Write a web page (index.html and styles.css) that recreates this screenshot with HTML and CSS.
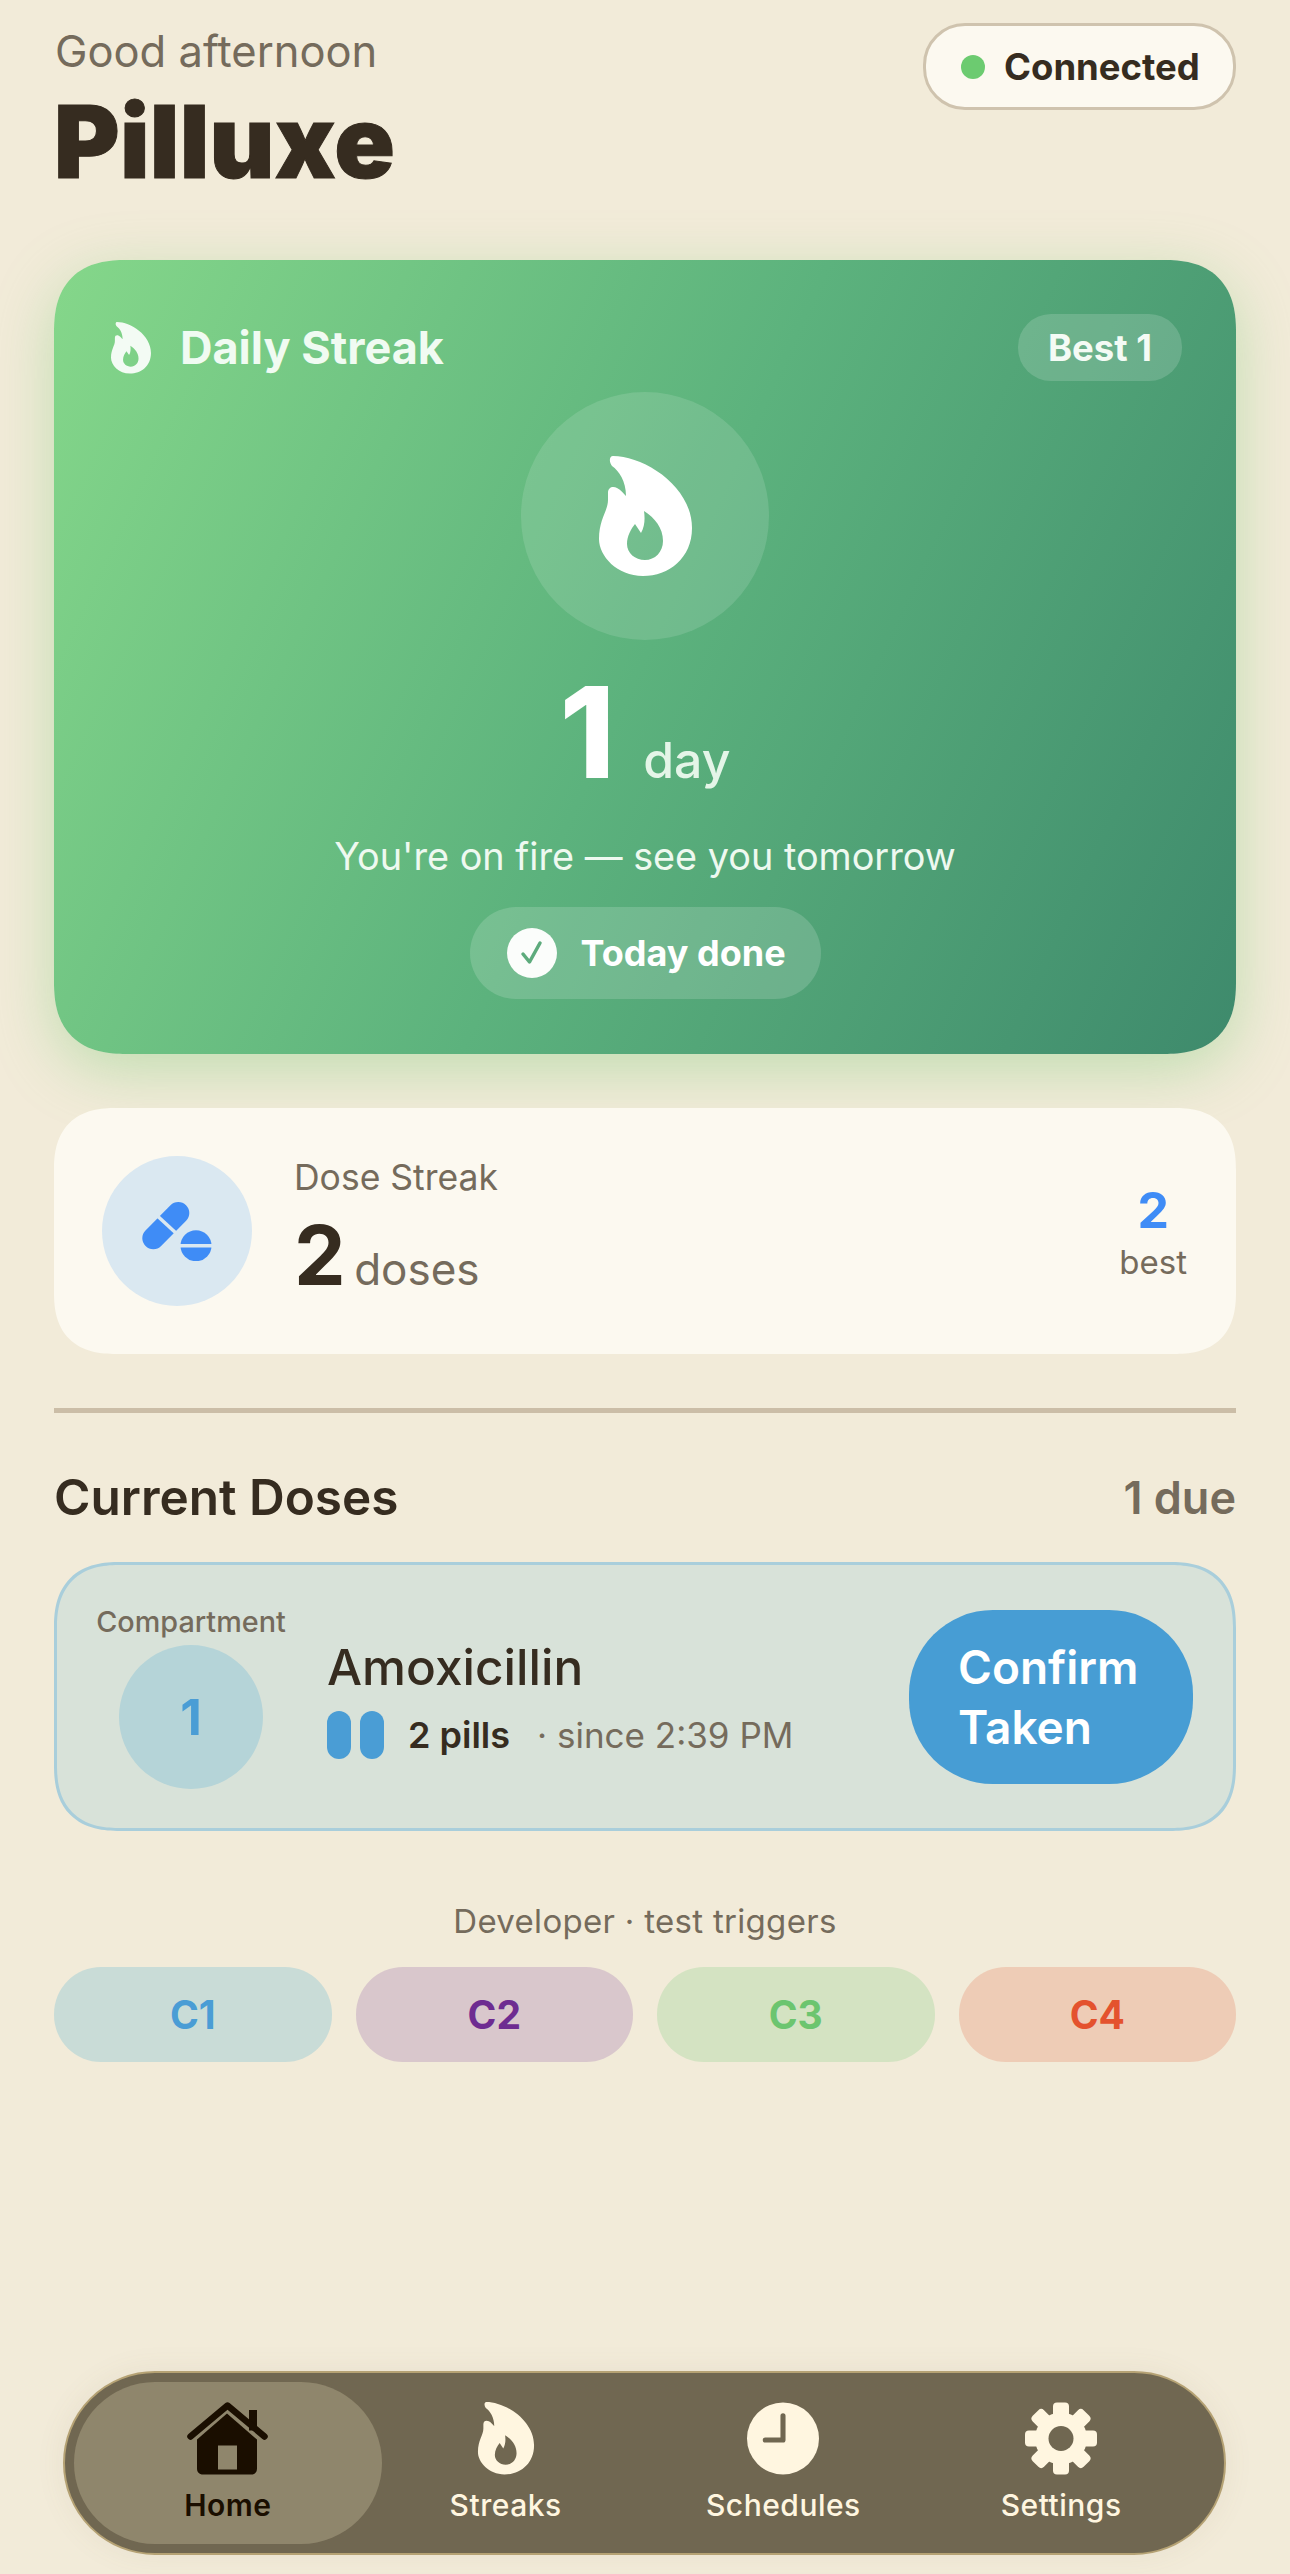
FILE: index.html
```html
<!DOCTYPE html>
<html lang="en">

<head>
    <meta charset="utf-8">
    <title>Pilluxe</title>
    <link rel="stylesheet" href="styles.css">
</head>

<body>
    <svg class="defs" width="0" height="0">
        <symbol id="flame" viewBox="0 0 93 121">
            <path fill-rule="evenodd" d="M14 0C45 0 93 30 93 72C93 102 70 120 44 120C18 120 0 100 0 83C0 63 9 55 9 44L9 37C9 31 14 30 18 32C22 34 25 38 27 40C27 25 20 15 13 10C10 6 10 0 14 0ZM45 55C56 62 64 72 64 85C64 96 56 104 46 104C36 104 28 97 28 88C28 80 32 73 36 68L42 77C46 70 46 62 45 55Z" />
        </symbol>
    </svg>

    <div class="page">
        <header class="top">
            <div>
                <p class="greeting">Good afternoon</p>
                <h1 class="brand">Pilluxe</h1>
            </div>
            <div class="status">
                <span class="status-dot"></span>
                <span>Connected</span>
            </div>
        </header>

        <!-- daily streak -->
        <section class="daily">
            <div class="daily-head">
                <div class="daily-title">
                    <svg class="flame-small"><use href="#flame" /></svg>
                    <span>Daily Streak</span>
                </div>
                <span class="best-pill">Best 1</span>
            </div>

            <div class="flame-circle">
                <svg class="flame-big"><use href="#flame" /></svg>
            </div>

            <div class="daily-count">
                <span class="daily-num">1</span>
                <span class="daily-unit">day</span>
            </div>

            <p class="daily-msg">You're on fire — see you tomorrow</p>

            <div class="done-pill">
                <svg class="done-check" viewBox="0 0 50 50">
                    <circle cx="25" cy="25" r="25" fill="#fbfdfb" />
                    <path d="M16 26L22.500 34L33 15" fill="none" stroke="#5dab7c" stroke-width="3.500" stroke-linecap="round" stroke-linejoin="round" />
                </svg>
                <span>Today done</span>
            </div>
        </section>

        <!-- dose streak -->
        <section class="dose-streak">
            <div class="pill-circle">
                <svg class="pill-icon" viewBox="0 0 70 60">
                    <path d="M11.300 37.300L36.300 12" fill="none" stroke="#3f8cf6" stroke-width="22" stroke-linecap="round" />
                    <path d="M16 15.500L35 33" fill="none" stroke="#dae8f1" stroke-width="3.500" />
                    <circle cx="54" cy="44.700" r="15.500" fill="#3f8cf6" />
                    <path d="M37 44.700H71" fill="none" stroke="#dae8f1" stroke-width="3.500" />
                </svg>
            </div>
            <div class="dose-info">
                <p class="dose-label">Dose Streak</p>
                <p class="dose-value"><span class="dose-num">2</span> <span class="dose-unit">doses</span></p>
            </div>
            <div class="dose-best">
                <span class="dose-best-num">2</span>
                <span class="dose-best-label">best</span>
            </div>
        </section>

        <hr class="divider" />

        <div class="section-head">
            <h2>Current Doses</h2>
            <span>1 due</span>
        </div>

        <!-- current dose -->
        <section class="dose-card">
            <div class="compartment">
                <span class="compartment-label">Compartment</span>
                <span class="compartment-num">1</span>
            </div>
            <div class="dose-main">
                <h3>Amoxicillin</h3>
                <div class="dose-meta">
                    <span class="pill-marks"><i></i><i></i></span>
                    <strong>2 pills</strong>
                    <span class="dose-since">· since 2:39 PM</span>
                </div>
            </div>
            <button class="confirm">Confirm<br>Taken</button>
        </section>

        <p class="dev-label">Developer · test triggers</p>
        <div class="triggers">
            <button class="trigger c1">C1</button>
            <button class="trigger c2">C2</button>
            <button class="trigger c3">C3</button>
            <button class="trigger c4">C4</button>
        </div>

        <nav class="tabbar">
            <a class="tab active">
                <svg class="tab-icon home-icon" viewBox="0 0 81 72">
                    <path d="M62 7.500H70V28H62Z" fill="#1a0e00" />
                    <path d="M10 37L40 11L70 37V66C70 69.500 68 72 64 72H16C12 72 10 69.500 10 66Z" fill="#1a0e00" />
                    <path d="M31 43H50V67H31Z" fill="#8f866c" />
                    <path d="M3.500 34L40.500 3L77.500 34" fill="none" stroke="#1a0e00" stroke-width="6.500" stroke-linecap="round" stroke-linejoin="round" />
                </svg>
                <span>Home</span>
            </a>
            <a class="tab">
                <svg class="tab-icon"><use href="#flame" /></svg>
                <span>Streaks</span>
            </a>
            <a class="tab">
                <svg class="tab-icon" viewBox="0 0 71 71">
                    <circle cx="35.500" cy="35.500" r="35.500" fill="#fff6e0" />
                    <path d="M35.500 13V37H18" fill="none" stroke="#706751" stroke-width="5" stroke-linecap="round" stroke-linejoin="round" />
                </svg>
                <span>Schedules</span>
            </a>
            <a class="tab">
                <svg class="tab-icon" viewBox="0 0 72 72">
                    <g fill="#fff6e0">
                        <rect x="28" width="16" height="72" rx="4" />
                        <rect x="28" width="16" height="72" rx="4" transform="rotate(45 36 36)" />
                        <rect x="28" width="16" height="72" rx="4" transform="rotate(90 36 36)" />
                        <rect x="28" width="16" height="72" rx="4" transform="rotate(135 36 36)" />
                        <circle cx="36" cy="36" r="26" />
                    </g>
                    <circle cx="36" cy="36" r="12.500" fill="#706751" />
                </svg>
                <span>Settings</span>
            </a>
        </nav>
    </div>
</body>

</html>
```

FILE: styles.css
```css
* {
    box-sizing: border-box;
}

body {
    margin: 0;
    background-color: #f2ebd9;
    color: #362c20;
    font-family: "Inter", "Liberation Sans", sans-serif;
}

p, h1, h2, h3 {
    margin: 0;
}

.defs {
    position: absolute;
}

.page {
    display: flex;
    flex-direction: column;
    width: 1290px;
    height: 2574px;
    padding: 23px 54px 19px 54px;
    overflow: hidden;
}

/* continuous corners, like the iOS cards */
.daily, .dose-streak, .dose-card {
    corner-shape: superellipse(1.3);
}

/* header */
.top {
    display: flex;
    justify-content: space-between;
    align-items: flex-start;
    height: 237px;
}

.greeting {
    margin-left: 1px;
    font-size: 43.500px;
    line-height: 56px;
    color: #756b5c;
}

.brand {
    margin-top: 13px;
    font-size: 100px;
    line-height: 100px;
    font-weight: 900;
    letter-spacing: 0.300px;
    -webkit-text-stroke: 1px #362c20;
}

.status {
    display: flex;
    align-items: center;
    gap: 19px;
    width: 313px;
    height: 87px;
    padding-left: 35px;
    background-color: #fcf9f0;
    border: 3px solid #cfc3ae;
    border-radius: 42px;
    font-size: 36.500px;
    font-weight: 700;
}

.status-dot {
    width: 24px;
    height: 24px;
    border-radius: 50%;
    background-color: #6ccb70;
}

/* daily streak */
.daily {
    display: flex;
    flex-direction: column;
    align-items: center;
    height: 794px;
    padding: 54px 55px 0;
    border-radius: 72px;
    background: linear-gradient(115deg, #85d78a 0%, #5cb27d 50%, #3e8a6c 100%);
    box-shadow: 0 16px 60px rgba(110, 200, 110, 0.38);
    color: #fff;
}

.daily-head {
    display: flex;
    justify-content: space-between;
    align-items: center;
    width: 100%;
    height: 67px;
}

.daily-title {
    display: flex;
    align-items: center;
    gap: 28px;
    margin-left: 1px;
    font-size: 45px;
    font-weight: 700;
    color: #f0fbf2;
}

.flame-small {
    width: 42px;
    height: 52px;
    fill: #f3fbf4;
}

.best-pill {
    display: flex;
    align-items: center;
    justify-content: center;
    width: 164px;
    height: 67px;
    margin-right: -1px;
    border-radius: 33px;
    background-color: rgba(255, 255, 255, 0.16);
    font-size: 36.500px;
    font-weight: 700;
    color: #f4fbf5;
}

.flame-circle {
    display: flex;
    align-items: center;
    justify-content: center;
    flex: none;
    width: 248px;
    height: 248px;
    margin-top: 11px;
    border-radius: 50%;
    background-color: rgba(255, 255, 255, 0.13);
}

.flame-big {
    width: 93px;
    height: 121px;
    fill: #fff;
}

.daily-count {
    display: flex;
    align-items: baseline;
    gap: 28px;
    height: 120px;
    margin-top: 32px;
}

.daily-num {
    font-size: 126px;
    line-height: 120px;
    font-weight: 800;
}

.daily-unit {
    font-size: 50px;
    font-weight: 500;
    color: #e4f5e8;
}

.daily-msg {
    margin-top: 39px;
    font-size: 37.800px;
    line-height: 50px;
    color: #eef9f0;
}

.done-pill {
    display: flex;
    align-items: center;
    gap: 24px;
    width: 351px;
    height: 92px;
    margin-top: 26px;
    padding-left: 37px;
    border-radius: 46px;
    background-color: rgba(255, 255, 255, 0.16);
    font-size: 36px;
    font-weight: 700;
}

.done-check {
    width: 50px;
    height: 50px;
}

/* dose streak */
.dose-streak {
    display: flex;
    align-items: center;
    height: 246px;
    margin-top: 54px;
    padding: 0 49px 0 48px;
    border-radius: 62px;
    background-color: #fcf9f0;
}

.pill-circle {
    display: flex;
    align-items: center;
    justify-content: center;
    width: 150px;
    height: 150px;
    border-radius: 50%;
    background-color: #dae8f1;
}

.pill-icon {
    width: 70px;
    height: 60px;
    overflow: hidden;
}

.dose-info {
    flex: 1;
    margin-left: 42px;
    padding-top: 16px;
}

.dose-label {
    font-size: 35.500px;
    line-height: 44px;
    color: #756b5c;
}

.dose-value {
    margin-top: 12px;
    line-height: 88px;
}

.dose-num {
    font-size: 82px;
    font-weight: 700;
}

.dose-unit {
    margin-left: 4px;
    font-size: 44px;
    color: #756b5c;
}

.dose-best {
    display: flex;
    flex-direction: column;
    align-items: center;
    padding-top: 4px;
}

.dose-best-num {
    font-size: 50px;
    line-height: 58px;
    font-weight: 700;
    color: #3f8cf6;
}

.dose-best-label {
    font-size: 33px;
    line-height: 46px;
    color: #756b5c;
}

.divider {
    width: 100%;
    height: 5px;
    margin: 54px 0 0;
    border: none;
    background-color: #cbbda7;
}

.section-head {
    display: flex;
    justify-content: space-between;
    align-items: center;
    height: 60px;
    margin-top: 54px;

    h2 {
        font-size: 49.500px;
        font-weight: 600;
    }

    span {
        font-size: 45px;
        font-weight: 600;
        color: #756b5c;
    }
}

/* current dose */
.dose-card {
    display: flex;
    align-items: center;
    height: 269px;
    margin-top: 35px;
    padding: 0 40px 0 39px;
    border: 3px solid #a9cedb;
    border-radius: 66px;
    background-color: #d8e2d9;
}

.compartment {
    display: flex;
    flex-direction: column;
    align-items: center;
    width: 190px;
}

.compartment-label {
    font-size: 28.800px;
    line-height: 34px;
    font-weight: 500;
    color: #756b5c;
}

.compartment-num {
    display: flex;
    align-items: center;
    justify-content: center;
    width: 144px;
    height: 144px;
    margin-top: 6px;
    border-radius: 50%;
    background-color: #b5d4d8;
    font-size: 50px;
    font-weight: 700;
    color: #4a9dd5;
}

.dose-main {
    flex: 1;
    margin-left: 41px;

    h3 {
        font-size: 49.500px;
        line-height: 64px;
        font-weight: 500;
    }
}

.dose-meta {
    display: flex;
    align-items: center;
    gap: 24px;
    margin-top: 12px;
    font-size: 36px;

    strong {
        font-weight: 600;
    }
}

.pill-marks {
    display: flex;
    gap: 9px;

    i {
        width: 24px;
        height: 48px;
        border-radius: 12px;
        background-color: #4a9dd5;
    }
}

.dose-since {
    margin-left: 3px;
    font-size: 35px;
    color: #756b5c;
}

.confirm {
    width: 284px;
    height: 174px;
    padding: 0 0 0 49px;
    border: none;
    border-radius: 84px;
    background-color: #479dd4;
    color: #fff;
    font-family: inherit;
    font-size: 46px;
    line-height: 60px;
    font-weight: 600;
    text-align: left;
}

/* test triggers */
.dev-label {
    margin-top: 72px;
    font-size: 33px;
    line-height: 36px;
    letter-spacing: 0.300px;
    text-align: center;
    color: #756b5c;
}

.triggers {
    display: grid;
    grid-template-columns: repeat(4, 1fr);
    gap: 24px;
    margin-top: 28px;
}

.trigger {
    height: 95px;
    border: none;
    border-radius: 47px;
    font-family: inherit;
    font-size: 39px;
    font-weight: 700;
}

.c1 {
    background-color: #c9dcd7;
    color: #4a9dd5;
}

.c2 {
    background-color: #d9c7cc;
    color: #6e2c91;
}

.c3 {
    background-color: #d4e3c2;
    color: #6cc56f;
}

.c4 {
    background-color: #eeccb6;
    color: #e4522e;
}

/* bottom tab bar */
.tabbar {
    display: grid;
    grid-template-columns: repeat(4, 1fr);
    height: 184px;
    margin: auto 10px 0 9px;
    padding: 0 24px;
    border: 2px solid #b5a274;
    border-radius: 92px;
    background-color: #706751;
    box-shadow: 0 0 30px rgba(112, 103, 81, 0.08);
}

.tab {
    display: flex;
    flex-direction: column;
    align-items: center;
    padding-top: 29px;
    font-size: 30px;
    line-height: 36px;
    letter-spacing: 0.500px;
    font-weight: 500;
    color: #fff6e0;

    span {
        margin-top: 12px;
    }
}

.tab-icon {
    width: 72px;
    height: 73px;
    fill: #fff6e0;
}

.home-icon {
    width: 81px;
}

.tab.active {
    margin: 9px -15px;
    padding-top: 20px;
    border-radius: 81px;
    background-color: #8f866c;
    color: #1a0e00;
    font-weight: 600;
}
```
